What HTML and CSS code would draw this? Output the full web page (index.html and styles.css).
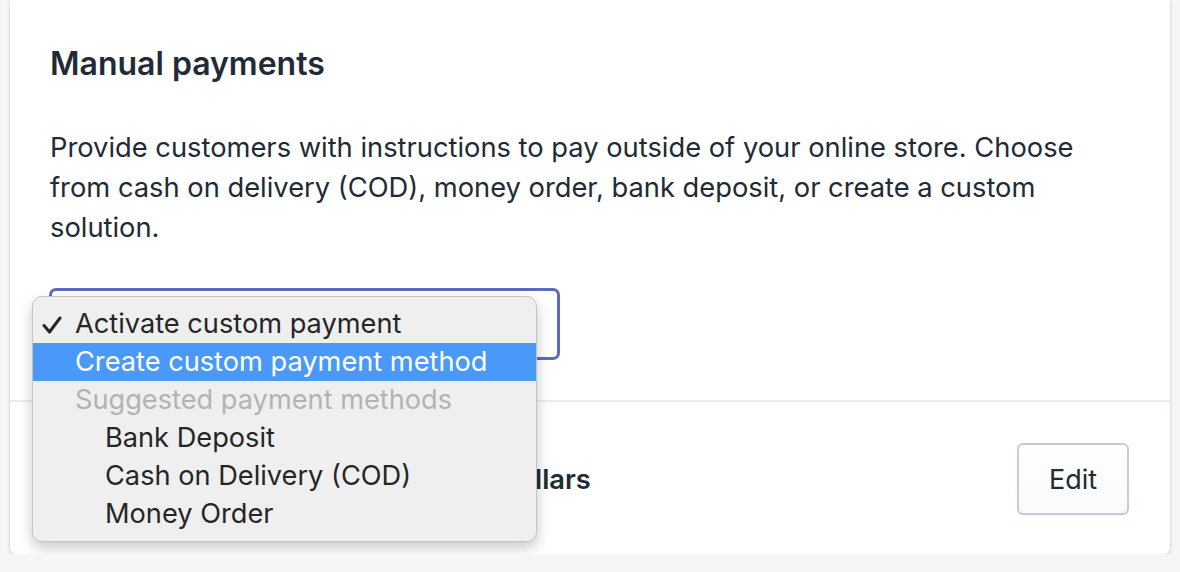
FILE: index.html
```html
<!DOCTYPE html>
<html>
<head>
<meta charset="utf-8">
<link rel="stylesheet" href="styles.css">
</head>
<body>
<div class="card">
  <section class="section">
    <h2 class="title">Manual payments</h2>
    <p class="desc">Provide customers with instructions to pay outside of your online store. Choose from cash on delivery (COD), money order, bank deposit, or create a custom solution.</p>
    <div class="select-wrap">
      <div class="select"><span class="select-text">Activate custom payment</span></div>
      <div class="menu">
        <div class="item"><svg class="check" width="20" height="18" viewBox="0 0 20 18"><polyline points="2,9.5 7.5,16 18,2" fill="none" stroke="#262626" stroke-width="3" stroke-linecap="round" stroke-linejoin="round"/></svg>Activate custom payment</div>
        <div class="item active">Create custom payment method</div>
        <div class="item disabled">Suggested payment methods</div>
        <div class="item sub">Bank Deposit</div>
        <div class="item sub">Cash on Delivery (COD)</div>
        <div class="item sub">Money Order</div>
      </div>
    </div>
  </section>
  <section class="section row">
    <span class="row-text">All payments are processed in US Dollars</span>
    <button class="btn">Edit</button>
  </section>
</div>
</body>
</html>
```
FILE: styles.css
```css
html, body {
  margin: 0;
  padding: 0;
  background: #f4f6f8;
  font-family: Inter, "Noto Sans", sans-serif;
  color: #212b36;
}
.card {
  margin: 0 10px;
  background: #fff;
  border-radius: 0 0 6px 6px;
  box-shadow: 0 0 0 1px rgba(63,63,68,0.06), 0 2px 4px 0 rgba(63,63,68,0.15);
}
.section {
  padding: 40px;
}
.section + .section {
  border-top: 2px solid #ebeef0;
}
.title {
  margin: 0;
  font-size: 32px;
  line-height: 48px;
  font-weight: 600;
}
.desc {
  margin: 40px 0 0;
  max-width: 1040px;
  font-size: 27.3px;
  line-height: 40px;
  font-weight: 400;
}
.select-wrap {
  position: relative;
  margin-top: 40px;
  margin-left: -1px;
  width: 511px;
}
.select {
  height: 66px;
  border: 3px solid #5c6ac4;
  border-radius: 7px;
  background: #fff;
  display: flex;
  align-items: center;
  padding: 0 20px;
  font-size: 26px;
}
.menu {
  position: absolute;
  left: -17px;
  top: 8px;
  width: 503px;
  padding: 8px 0 8px;
  background: #efefef;
  border: 1px solid #c4c4c4;
  border-radius: 10px;
  box-shadow: 0 6px 14px rgba(0,0,0,0.22);
  font-family: Inter, sans-serif;
  font-size: 27.2px;
  color: #262626;
}
.item {
  position: relative;
  height: 38px;
  line-height: 38px;
  padding-left: 42px;
  white-space: nowrap;
}
.check {
  position: absolute;
  left: 9px;
  top: 11px;
}
.item.active {
  background: #4a99f9;
  color: #fff;
}
.item.disabled {
  color: #b3b3b3;
}
.item.sub {
  padding-left: 72px;
}
.row {
  display: flex;
  align-items: center;
  justify-content: space-between;
  padding-top: 41px;
  padding-bottom: 39px;
}
.row-text {
  font-size: 27.3px;
  font-weight: 600;
}
.btn {
  width: 112px;
  height: 72px;
  border: 2px solid #c4cdd5;
  border-radius: 6px;
  background: linear-gradient(#fff, #f9fafb);
  box-shadow: 0 1px 0 rgba(22,29,37,0.05);
  font-family: Inter, sans-serif;
  font-size: 27px;
  color: #212b36;
  margin-right: 1px;
}
```
